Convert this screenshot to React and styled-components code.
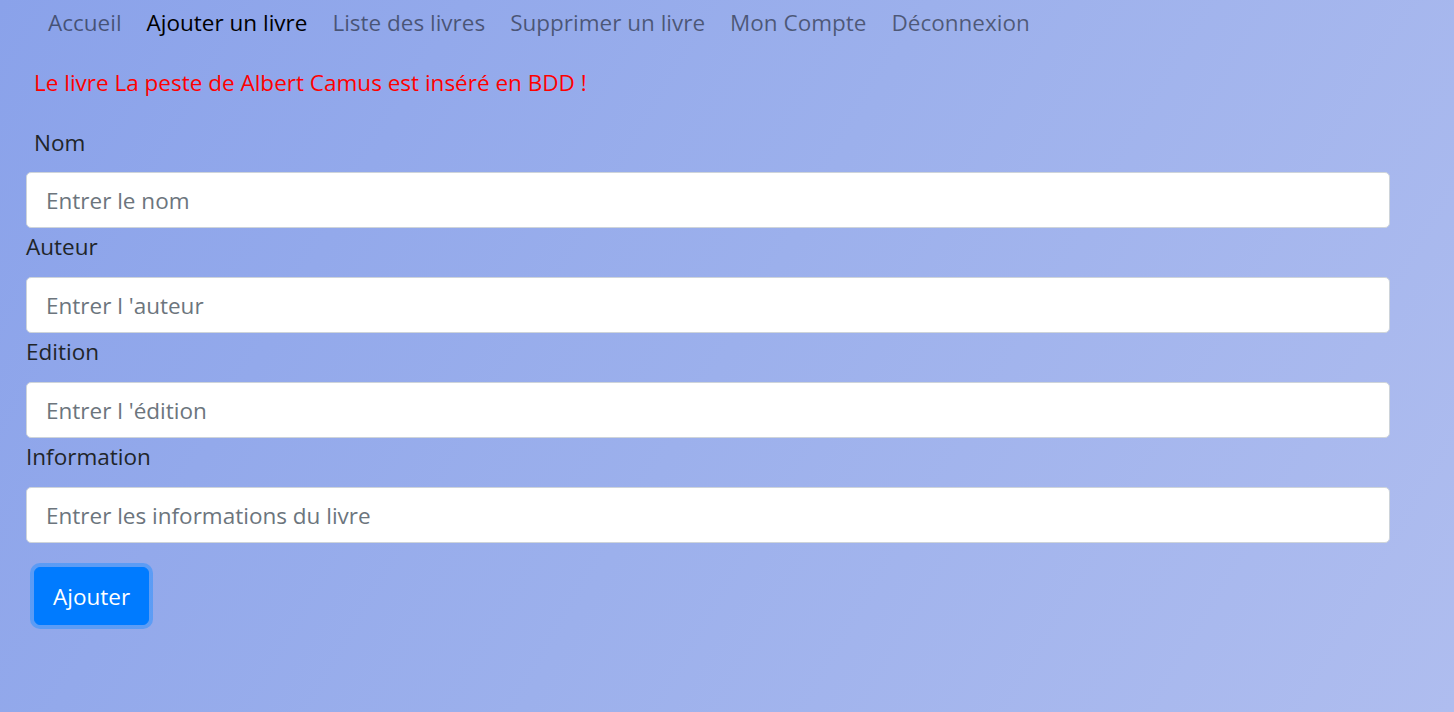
import React from 'react'
import styled, { createGlobalStyle } from 'styled-components'

const GlobalStyle = createGlobalStyle`
  html, body {
    margin: 0;
    padding: 0;
    min-height: 100%;
  }
  body {
    min-height: 712px;
    font-family: "Open Sans", "Noto Sans", sans-serif;
    background: linear-gradient(120deg, #8aa2ea 0%, #9cb0ec 50%, #afbdef 100%);
    color: #212529;
  }
`

const Page = styled.div`
  min-height: 712px;
  padding: 0 64px 0 26px;
  box-sizing: border-box;
`

const Nav = styled.nav`
  display: flex;
  align-items: center;
  gap: 25px;
  height: 44px;
  padding-left: 22px;
`

const NavLink = styled.a`
  font-size: 22.5px;
  color: ${p => (p.$active ? '#000' : 'rgba(0, 0, 0, 0.5)')};
  text-decoration: none;
  cursor: pointer;
`

const Message = styled.p`
  margin: 24px 0 0 8px;
  font-size: 22.5px;
  line-height: 30px;
  color: red;
`

const Form = styled.form`
  display: flex;
  flex-direction: column;
  margin-top: 30px;
`

const Label = styled.label`
  display: block;
  font-size: 22.5px;
  line-height: 30px;
  margin-left: ${p => (p.$indent ? '8px' : '0')};
  margin-bottom: ${p => (p.$first ? '14px' : '15px')};
`

const Input = styled.input`
  display: block;
  width: 100%;
  height: 56px;
  box-sizing: border-box;
  padding: 0 19px;
  font-family: inherit;
  font-size: 22.5px;
  color: #495057;
  background: #fff;
  border: 1px solid #ced4da;
  border-radius: 5px;
  outline: none;
  margin-bottom: 4px;
  &::placeholder {
    color: #6c757d;
  }
`

const Submit = styled.button`
  align-self: flex-start;
  margin: 20px 0 0 8px;
  height: 58px;
  padding: 0 18px;
  font-family: inherit;
  font-size: 22.5px;
  color: #fff;
  background: #007bff;
  border: 1px solid #007bff;
  border-radius: 6px;
  box-shadow: 0 0 0 4px rgba(38, 143, 255, 0.5);
  cursor: pointer;
`

const links = ['Accueil', 'Ajouter un livre', 'Liste des livres', 'Supprimer un livre', 'Mon Compte', 'Déconnexion']

const fields = [
  { label: 'Nom', placeholder: 'Entrer le nom' },
  { label: 'Auteur', placeholder: "Entrer l 'auteur" },
  { label: 'Edition', placeholder: "Entrer l 'édition" },
  { label: 'Information', placeholder: 'Entrer les informations du livre' },
]

export default function App() {
  return (
    <>
      <GlobalStyle />
      <Page>
        <Nav>
          {links.map(l => (
            <NavLink key={l} $active={l === 'Ajouter un livre'}>{l}</NavLink>
          ))}
        </Nav>
        <Message>Le livre La peste de Albert Camus est inséré en BDD !</Message>
        <Form onSubmit={e => e.preventDefault()}>
          {fields.map((f, i) => (
            <React.Fragment key={f.label}>
              <Label $indent={i === 0} $first={i === 0}>{f.label}</Label>
              <Input type="text" placeholder={f.placeholder} />
            </React.Fragment>
          ))}
          <Submit type="submit">Ajouter</Submit>
        </Form>
      </Page>
    </>
  )
}
